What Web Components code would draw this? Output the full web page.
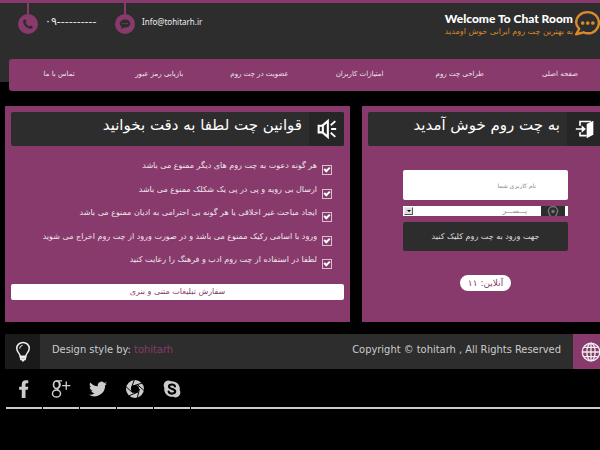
<!DOCTYPE html>
<html lang="fa">
<head>
<meta charset="utf-8">
<meta name="viewport" content="width=device-width, initial-scale=1">
<title>Welcome To Chat Room</title>
<style>
    body {
        --plum: #873a6b;
        --dark: #2d2d2d;
        --darker: #262626;
        --ink: #f0e6ec;
        margin: 0;
        background: #000;
        color: #fff;
        font-family: "DejaVu Sans", sans-serif;
        font-size: 10px;
        overflow-x: hidden;
    }
</style>
</head>
<body>
<chat-page></chat-page>

<script>
const ICONS = {
    phone: '<path fill="currentColor" d="M6.6 2.6 9 7.2 7 9.2c1.2 3.3 4 6.200 7.600 7.700l2-2 4.800 2.600c.1 2.600-2 4.300-4.200 4.200C9.500 21 3 14.500 2.200 7c-.1-2.300 1.800-4.600 4.400-4.400z"/>',
    comment: '<path fill="currentColor" d="M12 3C6 3 1.500 6.600 1.500 11.200c0 2.700 1.500 4.900 3.800 6.400-.2 1.700-1 3-2.300 4 2.700-.1 4.700-1 6.200-2.500.9.200 1.800.3 2.800.3 6 0 10.500-3.600 10.500-8.200S18 3 12 3z"/><g fill="#873a6b"><circle cx="7.500" cy="11" r="1.500"/><circle cx="12" cy="11" r="1.500"/><circle cx="16.500" cy="11" r="1.500"/></g>',
    bubble: '<path fill="none" stroke="currentColor" stroke-width="2.200" stroke-linejoin="round" d="M4.800 17.500C3 15.700 2 13.800 2 11.500 2 6 6.500 2 12.500 2S23 6.300 23 11.800 18.500 21.500 13 21.500c-1.600 0-3-.3-4.200-.9L2 22.500z"/><g fill="currentColor"><circle cx="8" cy="12" r="1.700"/><circle cx="12.700" cy="12" r="1.700"/><circle cx="17.400" cy="12" r="1.700"/></g>',
    door: '<path fill="none" stroke="currentColor" stroke-width="2" d="M6 8V3h13M6 16v4h8"/><path fill="currentColor" d="m14 6 8-4v17l-8 4zM1 11h7V7.500l5 4.500-5 4.500V13H1z"/>',
    speaker: '<path fill="none" stroke="currentColor" stroke-width="2.500" d="M2 8h4.500L13 2.500v19L6.500 16H2zM7 8v8"/><path stroke="currentColor" stroke-width="2.200" d="m16.500 7.500 5.500-5M17 12h6M16.500 16.500l5.500 5"/>',
    pin: '<path fill="none" stroke="currentColor" stroke-width="2.500" d="M12 23C8 18 4 13.500 4 9a8 8 0 0 1 16 0c0 4.500-4 9-8 14z"/><circle cx="12" cy="9.500" r="3" fill="currentColor"/>',
    bulb: '<path fill="none" stroke="currentColor" stroke-width="1.800" d="M8.500 17c0-3.500-4-4.800-4-9.500a7.500 7 0 0 1 15 0c0 4.700-4 6-4 9.500zM8.500 17l1 4h5l1-4M9 19h6"/><path fill="none" stroke="currentColor" stroke-width="1.200" d="M8 8a4 4 0 0 1 3.500-4"/><path fill="currentColor" d="M10 21h4l-1 2.500h-2z"/>',
    globe: '<g fill="none" stroke="currentColor" stroke-width="1.600"><circle cx="12" cy="12" r="10.500"/><ellipse cx="12" cy="12" rx="5" ry="10.500"/><path d="M12 1.500v21M1.500 12h21M3.500 6.500h17M3.500 17.500h17"/></g>',
    facebook: '<path fill="currentColor" d="M9 24V13H5.500V9H9V6c0-3.800 2-5.700 5.500-5.700 1.500 0 2.500.1 3.200.2V4.300h-2C14.200 4.300 14 5 14 6.200V9h3.700l-.6 4H14v11z"/>',
    google: '<g fill="none" stroke="currentColor"><ellipse cx="6" cy="6.300" rx="4" ry="5" stroke-width="2.200"/><path stroke-width="1.700" d="M5.500 1.200h8M9 2.500c2.800 2 2.400 5.500.2 7.500-2.500 2-3 2.600-.2 4"/><ellipse cx="6" cy="18" rx="5.400" ry="4.800" stroke-width="2"/><path stroke-width="1.800" d="M19 2v11M13.500 7.500h11"/></g>',
    twitter: '<path fill="currentColor" d="M24 4.600a10 10 0 0 1-2.800.8 5 5 0 0 0 2.100-2.700 10 10 0 0 1-3.100 1.200 4.900 4.900 0 0 0-8.400 4.500A14 14 0 0 1 1.700 3.200a4.900 4.900 0 0 0 1.500 6.500 5 5 0 0 1-2.200-.6 4.900 4.900 0 0 0 4 4.900 5 5 0 0 1-2.300.1 4.900 4.900 0 0 0 4.600 3.400A10 10 0 0 1 0 19.500a14 14 0 0 0 21.500-12.400A10 10 0 0 0 24 4.600z"/>',
    picasa: '<circle cx="12" cy="12" r="8.700" fill="none" stroke="currentColor" stroke-width="6.600"/><g stroke="#000" stroke-width="1.300"><path d="M11 0 7 11M22 4 9 8M24 14l-9-8M15 24l3-12M4 21l12-5M0 9l9 8"/></g>',
    skype: '<path fill="currentColor" d="M7 .8c1.300 0 2.500.4 3.500 1A10.300 10.300 0 0 1 22.300 13.800 6.300 6.300 0 0 1 13.700 22.300 10.300 10.300 0 0 1 1.800 10.300 6.300 6.300 0 0 1 7 .8z"/><path fill="none" stroke="#000" stroke-width="2.800" stroke-linecap="round" d="M16 8.500C15.500 6.800 14 6 12 6 9.700 6 8 7 8 8.800c0 4 8.300 2.200 8.300 6.300 0 2-1.800 3-4.300 3-2.300 0-4-.9-4.500-2.800"/>'
};

class ChatIcon extends HTMLElement {
    connectedCallback() {
        this.attachShadow({ mode: 'open' });
        this.shadowRoot.innerHTML = `
            <style>
                :host {
                    display: block;
                    flex: none;
                    width: 20px;
                    height: 20px;
                }

                svg {
                    display: block;
                    width: 100%;
                    height: 100%;
                    overflow: visible;
                }
            </style>
            <svg viewBox="0 0 24 24" aria-hidden="true">${ICONS[this.getAttribute('name')]}</svg>
        `;
    }
}

class ContactItem extends HTMLElement {
    connectedCallback() {
        this.attachShadow({ mode: 'open' });
        this.shadowRoot.innerHTML = `
            <style>
                :host {
                    display: flex;
                    gap: 7px;
                    color: #eee;
                }

                .hanger {
                    display: flex;
                    flex-direction: column;
                    align-items: center;
                }

                .stem {
                    width: 2px;
                    height: 11px;
                    background: var(--plum);
                }

                .disc {
                    display: grid;
                    place-items: center;
                    width: 20px;
                    height: 20px;
                    border-radius: 50%;
                    background: var(--plum);
                    color: var(--dark);
                }

                chat-icon {
                    width: 12px;
                    height: 12px;
                }

                .text {
                    padding-top: 12px;
                    line-height: 14px;
                }
            </style>
            <div class="hanger">
                <div class="stem"></div>
                <div class="disc"><chat-icon name="${this.getAttribute('icon')}"></chat-icon></div>
            </div>
            <div class="text"><slot></slot></div>
        `;
    }
}

class SiteHeader extends HTMLElement {
    connectedCallback() {
        this.attachShadow({ mode: 'open' });
        this.shadowRoot.innerHTML = `
            <style>
                :host {
                    display: block;
                    background: linear-gradient(var(--dark) 82px, #000 82px);
                }

                .top {
                    display: flex;
                    justify-content: space-between;
                    height: 56px;
                    border-top: 3px solid var(--plum);
                    padding-left: 18px;
                }

                .contacts {
                    display: flex;
                    font-family: "Noto Sans", "DejaVu Sans", sans-serif;
                    font-size: 8px;
                }

                .phone {
                    width: 97px;
                    font-family: "DejaVu Sans", sans-serif;
                    font-size: 11px;
                }

                .logo {
                    display: flex;
                    gap: 1px;
                    padding-top: 6px;
                }

                .logo h1 {
                    margin: 0;
                    padding-top: 3px;
                    font: 900 12px/14px Lato, sans-serif;
                    text-align: right;
                }

                .logo p {
                    margin: 0;
                    color: #d98a2b;
                    font-size: 8px;
                    line-height: 12px;
                    text-align: right;
                }

                .logo chat-icon {
                    width: 26px;
                    height: 28px;
                    color: #d98a2b;
                }

                nav {
                    display: grid;
                    grid-template-columns: repeat(6, 1fr);
                    margin: 0 -10px 0 9px;
                    border-radius: 3px;
                    background: var(--plum);
                }

                a {
                    color: var(--ink);
                    font-size: 7px;
                    line-height: 30px;
                    height: 32px;
                    text-align: center;
                    text-decoration: none;
                    white-space: nowrap;
                }
            </style>
            <div class="top">
                <div class="contacts">
                    <contact-item class="phone" icon="phone">۰۹----------</contact-item>
                    <contact-item icon="comment">Info@tohitarh.ir</contact-item>
                </div>
                <div class="logo">
                    <div>
                        <h1>Welcome To Chat Room</h1>
                        <p dir="rtl">به بهترین چت روم ایرانی خوش اومدید</p>
                    </div>
                    <chat-icon name="bubble"></chat-icon>
                </div>
            </div>
            <nav dir="rtl">
                <a href="#">صفحه اصلی</a>
                <a href="#">طراحی چت روم</a>
                <a href="#">امتیازات کاربران</a>
                <a href="#">عضویت در چت روم</a>
                <a href="#">بازیابی رمز عبور</a>
                <a href="#">تماس با ما</a>
            </nav>
        `;
    }
}

class PanelCard extends HTMLElement {
    connectedCallback() {
        this.attachShadow({ mode: 'open' });
        this.shadowRoot.innerHTML = `
            <style>
                :host {
                    display: block;
                    min-height: 204px;
                    padding: 6px;
                    background: var(--plum);
                    direction: rtl;
                }

                header {
                    display: flex;
                    height: 34px;
                    border-radius: 2px;
                    overflow: hidden;
                    background: var(--dark);
                }

                .cell {
                    display: grid;
                    place-items: center;
                    width: 35px;
                    background: var(--darker);
                }

                h2 {
                    margin: 0;
                    padding-right: 7px;
                    font-size: 15px;
                    font-weight: normal;
                    line-height: 26px;
                    white-space: nowrap;
                }
            </style>
            <header>
                <div class="cell"><chat-icon name="${this.getAttribute('icon')}"></chat-icon></div>
                <h2>${this.getAttribute('heading')}</h2>
            </header>
            <slot></slot>
        `;
    }
}

class RulesList extends HTMLElement {
    connectedCallback() {
        const rules = [
            'هر گونه دعوت به چت روم های دیگر ممنوع می باشد',
            'ارسال بی رویه و پی در پی یک شکلک ممنوع می باشد',
            'ایجاد مباحث غیر اخلاقی یا هر گونه بی احترامی به ادیان ممنوع می باشد',
            'ورود با اسامی رکیک ممنوع می باشد و در صورت ورود از چت روم اخراج می شوید',
            'لطفا در استفاده از چت روم ادب و فرهنگ را رعایت کنید'
        ];
        this.attachShadow({ mode: 'open' });
        this.shadowRoot.innerHTML = `
            <style>
                :host {
                    display: block;
                    padding-top: 11px;
                }

                ul {
                    display: grid;
                    grid-auto-rows: 1fr;
                    min-height: 118px;
                    margin: 0;
                    padding: 0 12px 0 0;
                    list-style: none;
                }

                label {
                    display: flex;
                    gap: 5px;
                    color: var(--ink);
                    font-size: 8px;
                    line-height: 17px;
                    white-space: nowrap;
                }

                input {
                    appearance: none;
                    box-sizing: border-box;
                    flex: none;
                    width: 10px;
                    height: 10px;
                    margin: 8px 0 0;
                    border: 1px solid #d9bfd0;
                }

                input:checked::before {
                    content: "";
                    display: block;
                    width: 4px;
                    height: 2px;
                    margin: 1px;
                    border: solid #fff;
                    border-width: 0 0 2px 2px;
                    transform: rotate(-45deg);
                }

                a {
                    display: block;
                    margin-top: 9px;
                    border-radius: 2px;
                    background: #fff;
                    color: var(--plum);
                    font-size: 8px;
                    line-height: 16px;
                    text-align: center;
                    text-decoration: none;
                }
            </style>
            <ul>
                ${rules.map(rule => `<li><label><input type="checkbox" checked>${rule}</label></li>`).join('')}
            </ul>
            <a href="#">سفارش تبلیغات متنی و بنری</a>
        `;
    }
}

class LoginForm extends HTMLElement {
    connectedCallback() {
        this.attachShadow({ mode: 'open' });
        this.shadowRoot.innerHTML = `
            <style>
                :host {
                    display: block;
                    padding: 24px 34px 0 35px;
                }

                form {
                    display: grid;
                    gap: 6px;
                }

                input, select, button {
                    box-sizing: border-box;
                    width: 100%;
                    margin: 0;
                    border: 0;
                    font-family: inherit;
                }

                input {
                    height: 30px;
                    padding: 0 32px;
                    border-radius: 2px;
                    background: #fff;
                    font-size: 6px;
                }

                input::placeholder {
                    color: #888;
                }

                .gender {
                    display: grid;
                    grid-template-columns: 3px 24px 1fr 11px;
                    background: #fff;
                }

                select {
                    grid-area: 1 / 1 / 2 / 5;
                    height: 10px;
                    padding: 0 41px 0 12px;
                    appearance: none;
                    background: #fff;
                    color: #888;
                    font-size: 7px;
                    line-height: 10px;
                }

                .pin {
                    grid-area: 1 / 2 / 2 / 3;
                    display: grid;
                    place-items: center;
                    height: 10px;
                    overflow: hidden;
                    background: var(--dark);
                    color: #777;
                    pointer-events: none;
                }

                .pin chat-icon {
                    width: 14px;
                    height: 14px;
                }

                .arrow {
                    grid-area: 1 / 4 / 2 / 5;
                    display: grid;
                    place-items: center;
                    box-sizing: border-box;
                    margin: 1px;
                    border: 1px solid;
                    border-color: #eee #555 #555 #eee;
                    background: #ddd;
                    pointer-events: none;
                }

                .arrow::before {
                    content: "";
                    border: 2px solid transparent;
                    border-top-color: #000;
                    border-bottom: 0;
                }

                button {
                    height: 29px;
                    border-radius: 2px;
                    background: var(--dark);
                    color: #ddd;
                    font-size: 8px;
                }

                .online {
                    width: fit-content;
                    margin: 24px auto 0;
                    padding: 0 8px;
                    border-radius: 8px;
                    background: #fff;
                    color: var(--plum);
                    font-size: 9px;
                    line-height: 16px;
                }
            </style>
            <form>
                <input type="text" placeholder="نام کاربری شما" aria-label="نام کاربری شما">
                <div class="gender">
                    <select aria-label="جنسیت"><option>پـــســـر</option><option>دختر</option></select>
                    <div class="pin"><chat-icon name="pin"></chat-icon></div>
                    <div class="arrow"></div>
                </div>
                <button type="button">جهت ورود به چت روم کلیک کنید</button>
            </form>
            <div class="online">آنلاین: ۱۱</div>
        `;
    }
}

class SiteFooter extends HTMLElement {
    connectedCallback() {
        const links = ['facebook', 'google', 'twitter', 'picasa', 'skype'];
        this.attachShadow({ mode: 'open' });
        this.shadowRoot.innerHTML = `
            <style>
                :host {
                    display: block;
                }

                .bar {
                    display: flex;
                    height: 35px;
                    background: var(--dark);
                    color: #ccc;
                    font: 11px/31px "DejaVu Sans Condensed", "DejaVu Sans", sans-serif;
                }

                .bar a {
                    color: var(--plum);
                    text-decoration: none;
                }

                .cell {
                    display: grid;
                    place-items: center;
                    width: 35px;
                    background: #1a1a1a;
                    color: #eee;
                }

                .cell.plum {
                    background: var(--plum);
                }

                .author {
                    flex: 1;
                    padding-left: 12px;
                }

                .rights {
                    padding-right: 12px;
                }

                .social {
                    display: flex;
                    gap: 1px;
                    padding: 1px 0 0 1px;
                }

                .social > * {
                    height: 37px;
                    border-bottom: 2px solid #ccc;
                }

                .social a {
                    display: grid;
                    place-items: center;
                    width: 36px;
                    color: #ccc;
                }

                .social chat-icon {
                    width: 18px;
                    height: 18px;
                }

                .line {
                    flex: 1;
                }
            </style>
            <div class="bar">
                <div class="cell"><chat-icon name="bulb"></chat-icon></div>
                <div class="author">Design style by: <a href="#">tohitarh</a></div>
                <div class="rights">Copyright © tohitarh , All Rights Reserved</div>
                <div class="cell plum"><chat-icon name="globe"></chat-icon></div>
            </div>
            <div class="social">
                ${links.map(name => `<a href="#" aria-label="${name}"><chat-icon name="${name}"></chat-icon></a>`).join('')}
                <div class="line"></div>
            </div>
        `;
    }
}

class ChatPage extends HTMLElement {
    connectedCallback() {
        this.attachShadow({ mode: 'open' });
        this.shadowRoot.innerHTML = `
            <style>
                :host {
                    display: block;
                    overflow: hidden;
                }

                main {
                    display: grid;
                    grid-template-columns: minmax(0, 345fr) minmax(0, 246fr);
                    gap: 12px;
                    margin: 15px -8px 12px 5px;
                }

                site-footer {
                    margin: 0 -8px 0 5px;
                }
            </style>
            <site-header></site-header>
            <main>
                <panel-card icon="speaker" heading="قوانین چت لطفا به دقت بخوانید">
                    <rules-list></rules-list>
                </panel-card>
                <panel-card icon="door" heading="به چت روم خوش آمدید">
                    <login-form></login-form>
                </panel-card>
            </main>
            <site-footer></site-footer>
        `;
    }
}

customElements.define('chat-icon', ChatIcon);
customElements.define('contact-item', ContactItem);
customElements.define('site-header', SiteHeader);
customElements.define('panel-card', PanelCard);
customElements.define('rules-list', RulesList);
customElements.define('login-form', LoginForm);
customElements.define('site-footer', SiteFooter);
customElements.define('chat-page', ChatPage);
</script>
</body>
</html>
